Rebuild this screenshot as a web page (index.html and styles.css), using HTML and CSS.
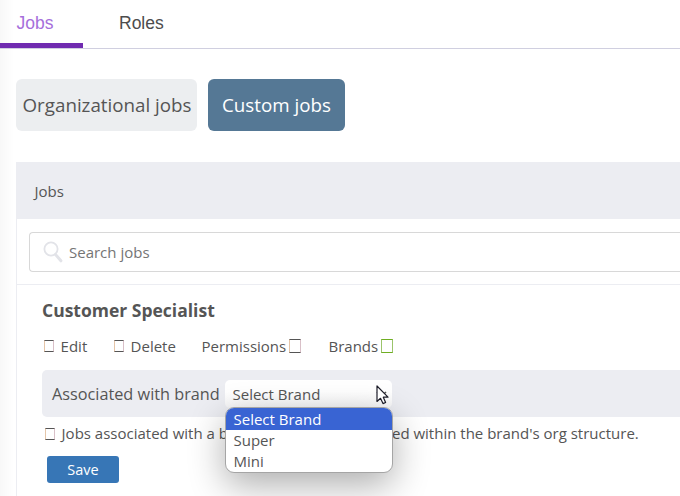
FILE: index.html
```html
<!DOCTYPE html>
<html lang="en">
<head>
    <meta charset="UTF-8">
    <meta name="viewport" content="width=device-width, initial-scale=1.0">
    <title>Jobs</title>
    <link rel="stylesheet" href="styles.css">
</head>
<body>
    <nav class="tabs">
        <a class="tab active">Jobs</a>
        <a class="tab">Roles</a>
    </nav>

    <main class="content">
        <div class="job-types">
            <button class="type-button">Organizational jobs</button>
            <button class="type-button selected">Custom jobs</button>
        </div>

        <section class="panel">
            <div class="panel-header">Jobs</div>
            <div class="search-row">
                <div class="search-box">
                    <svg class="search-icon" width="20" height="22" viewBox="0 0 20 22" fill="none" stroke="#e2e3e8">
                        <circle cx="8" cy="8" r="6.6" stroke-width="1.8"/>
                        <path d="M12.6 13.6L17.9 19.8" stroke-width="3" stroke-linecap="round"/>
                    </svg>
                    <input class="search-input" type="text" placeholder="Search jobs">
                </div>
            </div>

            <div class="job">
                <h3 class="job-title">Customer Specialist</h3>
                <div class="job-actions">
                    <span class="action edit"><i class="glyph"></i>Edit</span>
                    <span class="action delete"><i class="glyph"></i>Delete</span>
                    <span class="action permissions">Permissions<i class="glyph wide"></i></span>
                    <span class="action brands">Brands<i class="glyph wide green"></i></span>
                </div>
                <div class="brand-row">
                    <span class="brand-label">Associated with brand</span>
                    <div class="brand-select">
                        <span class="select-value">Select Brand</span>
                        <svg class="chevron" width="11" height="6" viewBox="0 0 11 6" fill="none" stroke="#555" stroke-width="1.6">
                            <path d="M1 1L5.5 5L10 1"/>
                        </svg>
                        <ul class="options">
                            <li class="option highlighted">Select Brand</li>
                            <li class="option">Super</li>
                            <li class="option">Mini</li>
                        </ul>
                        <svg class="cursor" width="14" height="21" viewBox="0 0 14 21">
                            <path d="M1 1V16.5L4.5 13.3L7 18.6L9.6 17.5L7.3 12.2H12Z" fill="#fff" stroke="#1c1c28" stroke-width="1.2" stroke-linejoin="round"/>
                        </svg>
                    </div>
                </div>
                <div class="note"><i class="glyph"></i><span>Jobs associated with a brand can only be assigned within the brand's org structure.</span></div>
                <button class="save-button">Save</button>
            </div>
        </section>
    </main>
</body>
</html>
```

FILE: styles.css
```css
* {
    box-sizing: border-box;
}

body {
    margin: 0;
    height: 496px;
    overflow: hidden;
    font-family: "Open Sans", "Noto Sans", sans-serif;
    font-size: 15px;
    color: #555;
    background: linear-gradient(to right, #f8f8f8, #fff 14px);
}

.tabs {
    display: flex;
    height: 49px;
    border-bottom: 1px solid #d0cfe0;
    font-family: "Liberation Sans", Arial, sans-serif;
    font-size: 17.5px;
}

.tab {
    height: 48px;
    padding: 0 36px;
    line-height: 46px;
    color: #4d4d4d;
}

.tab.active {
    width: 83px;
    padding: 0 0 0 16.5px;
    color: #a66fdb;
    border-bottom: 5px solid #702bb0;
}

.content {
    padding: 30px 0 0 16px;
}

.job-types {
    display: flex;
    gap: 11px;
    margin-bottom: 31px;
}

.type-button {
    width: 181px;
    height: 52px;
    padding: 0 0 1px 1px;
    border: none;
    border-radius: 6px;
    background: #eceef0;
    color: #555;
    font-family: inherit;
    font-size: 18.75px;
}

.type-button.selected {
    width: 137px;
    padding-left: 0;
    background: #557895;
    color: #fff;
}

.panel {
    height: 340px;
    border-left: 1px solid #ecedf2;
    background: #fff;
}

.panel-header {
    height: 57px;
    margin-left: -1px;
    padding-left: 18.5px;
    line-height: 58px;
    background: #ecedf2;
}

.search-row {
    height: 66px;
    padding: 13px 0 0 12px;
    border-bottom: 1px solid #ecedf2;
}

.search-box {
    display: flex;
    align-items: center;
    height: 40px;
    padding-left: 13px;
    border: 1px solid #d8d8d8;
    border-right: none;
    border-radius: 4px 0 0 4px;
}

.search-input {
    flex: 1;
    margin-left: 6px;
    padding: 0;
    border: none;
    outline: none;
    background: none;
    font: inherit;
}

.search-input::placeholder {
    color: #757575;
}

.job {
    padding: 13px 0 0 25px;
}

.job-title {
    margin: 0;
    font-size: 17.5px;
    line-height: 24px;
}

.job-actions {
    display: flex;
    align-items: center;
    height: 24px;
    margin: 12px 0;
}

.action {
    display: flex;
    align-items: center;
}

.edit {
    width: 70px;
    padding-left: 2px;
}

.delete {
    width: 89.5px;
    padding-left: 2px;
}

.permissions {
    width: 127px;
}

.glyph {
    flex: none;
    width: 10px;
    height: 12px;
    margin-right: 6.6px;
    border: 1px solid #555;
    border-left-color: #e5c5a8;
    border-right-color: #d9c0c8;
}

.glyph.wide {
    width: 12px;
    height: 14px;
    margin: 0 0 0 3px;
}

.glyph.green {
    border-color: #6fae22 #9bc46b;
}

.brand-row {
    display: flex;
    align-items: center;
    height: 47px;
    padding-left: 10px;
    border-radius: 5px 0 0 5px;
    background: #ecedf2;
}

.brand-label {
    width: 173px;
    font-size: 16.25px;
    white-space: nowrap;
}

.brand-select {
    position: relative;
    display: flex;
    align-items: center;
    justify-content: space-between;
    width: 167px;
    height: 28px;
    padding: 0 5px 0 7.5px;
    border-radius: 5px;
    background: linear-gradient(#fff 40%, #f6f6f7);
}

.options {
    position: absolute;
    top: 27px;
    left: 0;
    width: 168px;
    margin: 0;
    padding: 0;
    list-style: none;
    overflow: hidden;
    border: 1px solid #a5a5a5;
    border-radius: 9px;
    background: #fff;
    box-shadow: 0 12px 36px rgba(0, 0, 0, 0.32);
}

.option {
    height: 21px;
    padding-left: 7.5px;
    line-height: 21px;
}

.option.highlighted {
    height: 22px;
    line-height: 23px;
    background: #3964d3;
    color: #fff;
}

.cursor {
    position: absolute;
    top: 5px;
    left: 151px;
}

.note {
    display: flex;
    align-items: center;
    height: 20px;
    margin-top: 6px;
    padding-left: 3px;
    white-space: nowrap;
}

.note .glyph {
    position: relative;
    top: 1px;
}

.save-button {
    display: block;
    width: 72px;
    height: 27px;
    margin: 13px 0 0 5px;
    padding: 0;
    border: none;
    border-radius: 3px;
    background: #3776b6;
    color: #fff;
    font-family: inherit;
    font-size: 14.5px;
    font-weight: 500;
}
```
